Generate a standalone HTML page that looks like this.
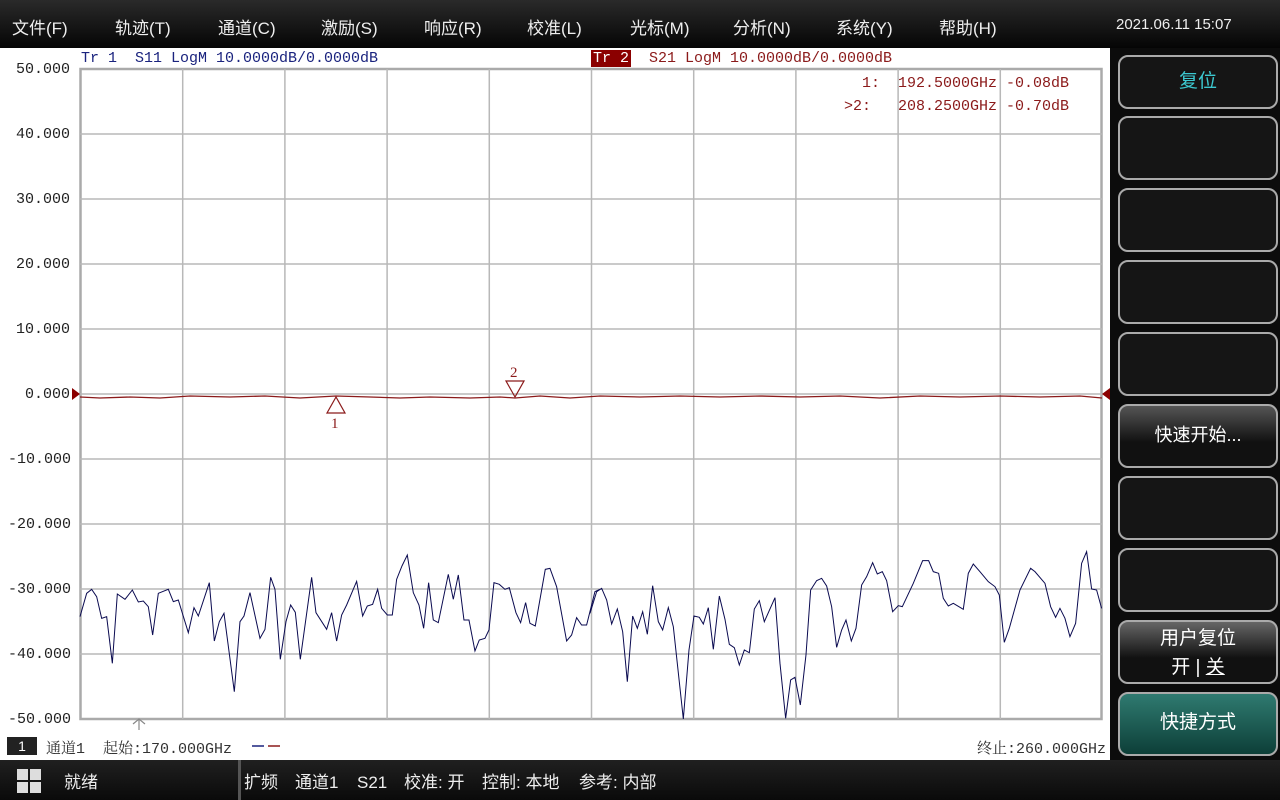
<!DOCTYPE html>
<html><head><meta charset="utf-8"><style>
*{margin:0;padding:0;box-sizing:border-box}
body{width:1280px;height:800px;overflow:hidden;background:#fff;position:relative;font-family:"Liberation Sans","Noto Sans CJK SC",sans-serif}
.menu{position:absolute;left:0;top:0;width:1280px;height:48px;background:linear-gradient(#2a2a2a,#050505);color:#eee;font-size:17px}
.menu span{position:absolute;top:14px}
.mono{font-family:"Liberation Mono","Noto Serif CJK SC",monospace}
.right{position:absolute;left:1110px;top:48px;width:170px;height:712px;background:#0c0c0c}
.btn{position:absolute;left:8px;width:160px;height:64px;border:2px solid #aaa;border-radius:10px;background:#151515;color:#fff;font-size:19px;text-align:center}
.status{position:absolute;left:0;top:760px;width:1280px;height:40px;background:linear-gradient(#202020,#0a0a0a);color:#eee;font-size:17px}
.status span{position:absolute;top:13px;white-space:pre;line-height:20px;height:20px;display:block}
.yl{position:absolute;left:8px;font-size:15px;color:#222;width:62px;text-align:right}
</style></head><body>
<div class="menu">
<span style="left:12px">文件(F)</span><span style="left:115px">轨迹(T)</span><span style="left:218px">通道(C)</span><span style="left:321px">激励(S)</span><span style="left:424px">响应(R)</span><span style="left:527px">校准(L)</span><span style="left:630px">光标(M)</span><span style="left:733px">分析(N)</span><span style="left:836px">系统(Y)</span><span style="left:939px">帮助(H)</span><span style="left:1116px;font-size:15px;top:16px">2021.06.11 15:07</span>
</div>
<div class="mono" style="position:absolute;left:81px;top:50px;font-size:15px;color:#1a237e;white-space:pre">Tr 1  S11 LogM 10.0000dB/0.0000dB</div>
<div class="mono" style="position:absolute;left:591px;top:50px;font-size:15px;color:#8b1a1a;white-space:pre"><span style="background:#8b0000;color:#fff;padding:0 2px">Tr 2</span>  S21 LogM 10.0000dB/0.0000dB</div>
<div class="mono" style="position:absolute;left:862px;top:72px;font-size:15px;color:#8b1a1a;white-space:pre;line-height:23px">1:</div>
<div class="mono" style="position:absolute;left:844px;top:95px;font-size:15px;color:#8b1a1a;white-space:pre;line-height:23px">&gt;2:</div>
<div class="mono" style="position:absolute;left:898px;top:72px;font-size:15px;color:#8b1a1a;white-space:pre;line-height:23px">192.5000GHz -0.08dB
208.2500GHz -0.70dB</div>
<div class="yl mono" style="top:61px">50.000</div>
<div class="yl mono" style="top:126px">40.000</div>
<div class="yl mono" style="top:191px">30.000</div>
<div class="yl mono" style="top:256px">20.000</div>
<div class="yl mono" style="top:321px">10.000</div>
<div class="yl mono" style="top:386px">0.000</div>
<div class="yl mono" style="top:451px">-10.000</div>
<div class="yl mono" style="top:516px">-20.000</div>
<div class="yl mono" style="top:581px">-30.000</div>
<div class="yl mono" style="top:646px">-40.000</div>
<div class="yl mono" style="top:711px">-50.000</div>
<svg style="position:absolute;left:0;top:0" width="1110" height="760">
<g stroke="#b8b8b8" stroke-width="1.5" fill="none">
<rect x="80.5" y="69" width="1021" height="650" stroke-width="2.5" stroke="#aaa"/>
<path d="M182.7 69V719M284.9 69V719M387.1 69V719M489.3 69V719M591.5 69V719M693.7 69V719M795.9 69V719M898.1 69V719M1000.3 69V719M80 134H1102M80 199H1102M80 264H1102M80 329H1102M80 394H1102M80 459H1102M80 524H1102M80 589H1102M80 654H1102"/>
</g>
<g fill="none" stroke="#0a0a50" stroke-width="3" transform="translate(80,540) scale(0.3333)">
<polyline points="0,230 20,160 35,148 50,170 65,235 80,230 97,370 112,162 135,178 157,150 175,186 190,183 205,200 218,285 235,160 265,148 280,185 295,180 325,278 342,203 355,228 388,128 403,303 418,245 432,220 463,455 480,245 492,228 510,158 540,295 555,268 572,112 585,148 601,358 618,245 632,195 646,217 661,358 695,112 708,218 740,268 755,218 770,303 785,225 800,195 830,124 848,228 862,198 878,193 893,148 905,205 922,225 937,225 950,118 966,78 982,45 1000,158 1017,195 1031,265 1046,128 1060,240 1075,248 1105,103 1120,178 1135,105 1152,240 1167,240 1185,333 1198,300 1215,295 1227,270 1242,128 1258,133 1275,148 1288,143 1308,218 1322,248 1337,188 1350,250 1366,258 1396,88 1410,85 1430,140 1460,303 1475,285 1490,233 1505,255 1520,255 1545,155 1560,148"/>
</g>
<g fill="none" stroke="#0a0a50" stroke-width="3" transform="translate(590,540) scale(0.3333)">
<polyline points="0,220 20,155 35,145 50,180 65,252 82,207 98,275 112,425 128,228 142,265 158,215 172,283 188,137 205,245 218,270 235,203 250,260 280,537 297,330 312,228 328,232 340,252 355,203 370,328 388,168 405,238 418,313 433,323 448,375 463,330 478,338 493,207 508,182 523,245 555,173 570,370 587,535 602,420 615,412 631,495 648,345 662,150 680,122 695,115 710,138 725,200 740,322 755,270 768,240 784,303 798,265 815,135 830,110 848,68 862,102 877,95 890,122 908,215 925,197 937,200 970,130 998,62 1016,62 1030,95 1046,100 1060,175 1075,198 1090,190 1120,208 1135,100 1150,72 1170,95 1195,125 1215,140 1228,165 1243,307 1258,265 1290,150 1322,85 1335,95 1365,130 1382,200 1397,232 1410,205 1425,235 1440,290 1457,250 1475,70 1490,35 1505,147 1520,150 1535,205"/>
</g>
<polyline fill="none" stroke="#8b1a1a" stroke-width="1.3" points="80,397 100,398 130,397 160,398 190,396 230,397 265,396 300,398 336,396 370,397 400,398 430,397 470,398 500,397 515,398 540,396 570,398 600,396 640,397 680,396 720,397 760,396 800,397 840,396 880,398 920,396 960,397 1000,396 1040,397 1080,396 1102,398"/>
<path d="M72 388L80 394L72 400Z M1110 388L1102 394L1110 400Z" fill="#8b0000"/>
<path d="M336 397L327 413L345 413Z" fill="none" stroke="#8b1a1a" stroke-width="1.2"/>
<path d="M515 397L506 381L524 381Z" fill="none" stroke="#8b1a1a" stroke-width="1.2"/>
<text x="331" y="428" font-family="Liberation Serif" font-size="15" fill="#8b1a1a">1</text>
<text x="510" y="377" font-family="Liberation Serif" font-size="15" fill="#8b1a1a">2</text>
<path d="M139 730V719M133 724L139 719L145 724" stroke="#888" fill="none" stroke-width="1.2"/>
<path d="M252 746H264" stroke="#1a237e" stroke-width="1.5"/><path d="M268 746H280" stroke="#8b1a1a" stroke-width="1.5"/>
</svg>
<div style="position:absolute;left:7px;top:737px;width:30px;height:18px;background:#222;color:#fff;font-size:14px;text-align:center;line-height:18px">1</div>
<div class="mono" style="position:absolute;left:46px;top:737px;font-size:15px;color:#333;white-space:pre">通道1  起始:170.000GHz</div>
<div class="mono" style="position:absolute;left:972px;top:737px;font-size:15px;color:#333;width:134px;text-align:right">终止:260.000GHz</div>
<div class="right">
<div class="btn" style="top:7px;height:54px;color:#3cc8d0;line-height:50px">复位</div>
<div class="btn" style="top:68px"></div>
<div class="btn" style="top:140px"></div>
<div class="btn" style="top:212px"></div>
<div class="btn" style="top:284px"></div>
<div class="btn" style="top:356px;background:linear-gradient(#555,#111 60%);line-height:58px;font-size:18px">快速开始...</div>
<div class="btn" style="top:428px"></div>
<div class="btn" style="top:500px"></div>
<div class="btn" style="top:572px;background:linear-gradient(#666,#111 60%);font-size:19px;line-height:29px;padding-top:2px">用户复位<br>开 | <u>关</u></div>
<div class="btn" style="top:644px;background:linear-gradient(#2f7a70,#0d3f38);line-height:58px">快捷方式</div>
</div>
<div class="status">
<div style="position:absolute;left:17px;top:9px;width:24px;height:24px;display:grid;grid-template-columns:11px 11px;gap:2px"><i style="background:#ddd"></i><i style="background:#ddd"></i><i style="background:#ddd"></i><i style="background:#ddd"></i></div>
<span style="left:64px">就绪</span>
<div style="position:absolute;left:238px;top:0;width:3px;height:40px;background:#555"></div>
<span style="left:244px">扩频</span><span style="left:295px">通道1</span><span style="left:357px">S21</span><span style="left:404px">校准: 开</span><span style="left:482px">控制: 本地</span><span style="left:579px">参考: 内部</span>
</div>
</body></html>
